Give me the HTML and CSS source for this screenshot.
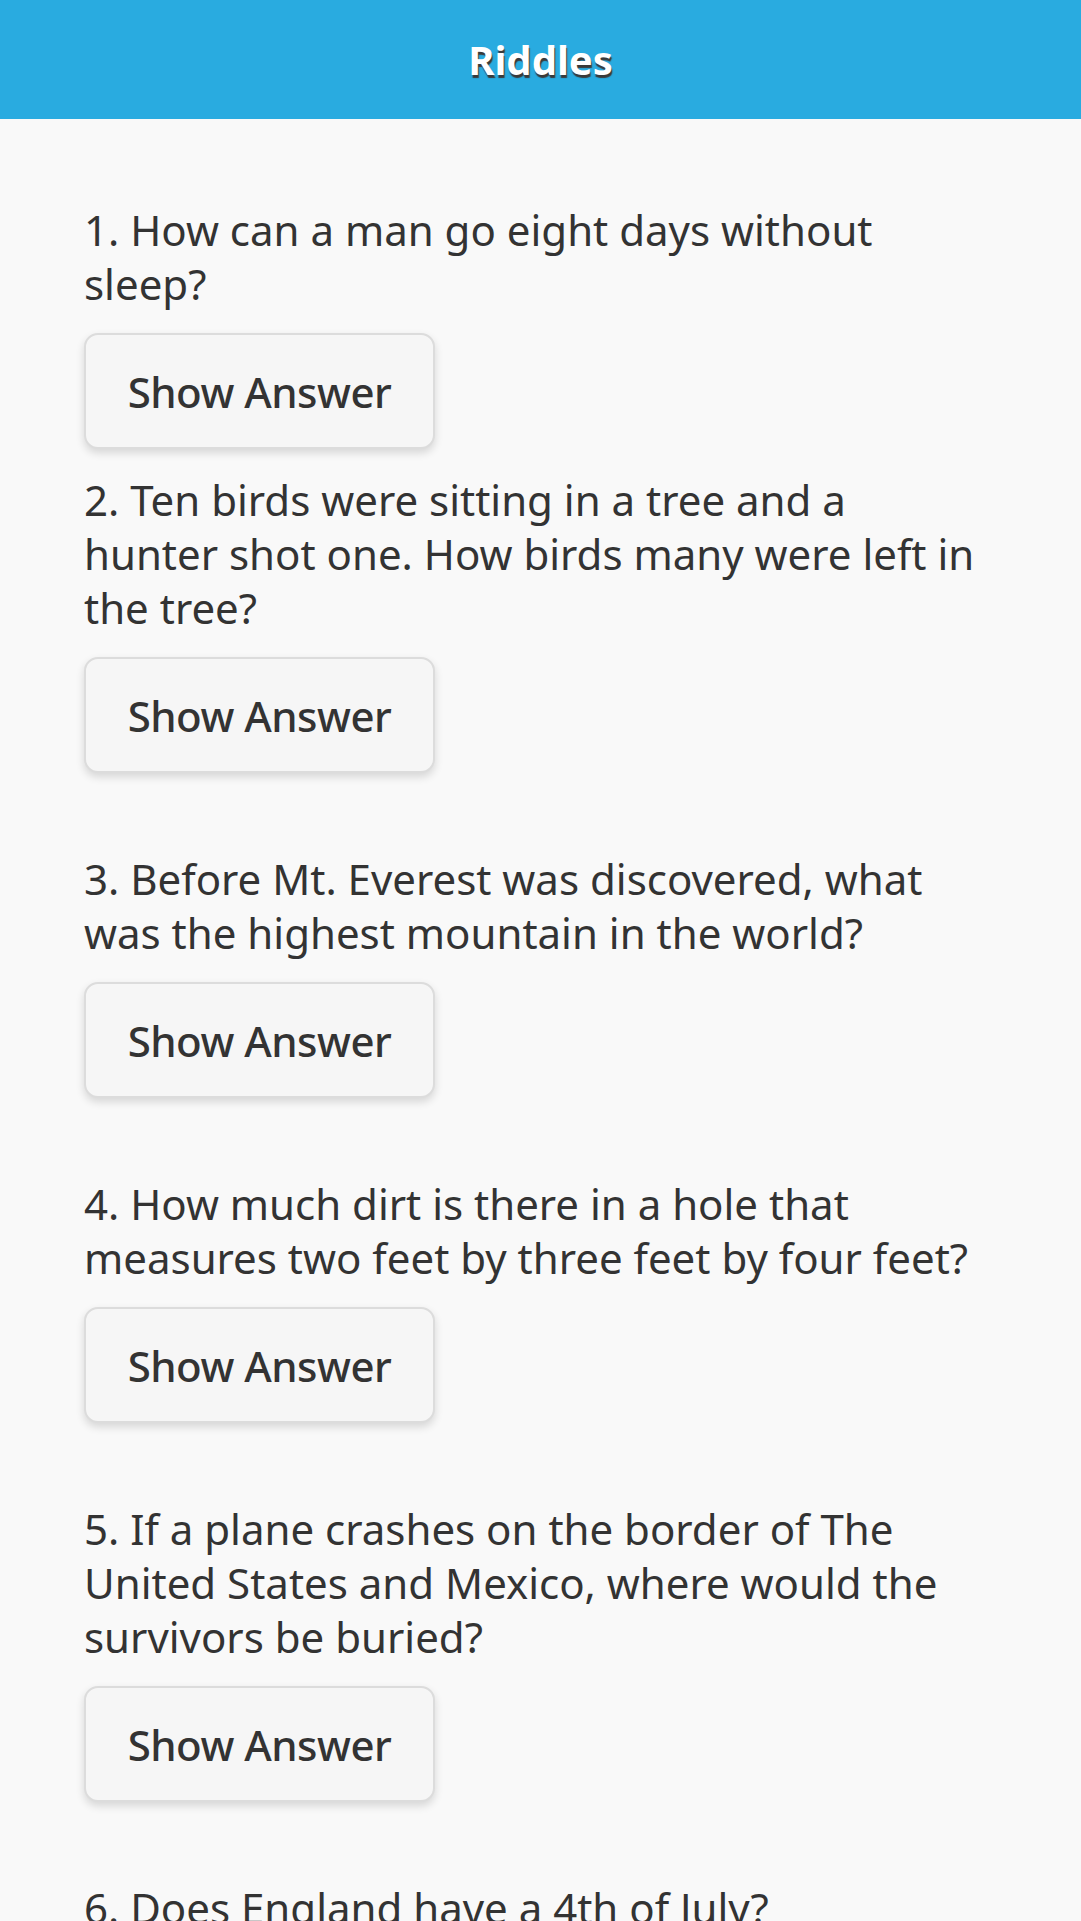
FILE: index.html
```html
<!DOCTYPE html>
<html lang="en">
<head>
<meta charset="utf-8">
<title>Riddles</title>
<link rel="stylesheet" href="styles.css">
</head>
<body>
<header class="bar">
  <h1 class="bar-title">Riddles</h1>
</header>
<main class="content">
  <section class="riddle riddle-tight">
    <p class="question">1. How can a man go eight days without sleep?</p>
    <button class="answer-btn" type="button">Show Answer</button>
  </section>
  <section class="riddle">
    <p class="question">2. Ten birds were sitting in a tree and a hunter shot one. How birds many were left in the tree?</p>
    <button class="answer-btn" type="button">Show Answer</button>
  </section>
  <section class="riddle">
    <p class="question">3. Before Mt. Everest was discovered, what was the highest mountain in the world?</p>
    <button class="answer-btn" type="button">Show Answer</button>
  </section>
  <section class="riddle">
    <p class="question">4. How much dirt is there in a hole that measures two feet by three feet by four feet?</p>
    <button class="answer-btn" type="button">Show Answer</button>
  </section>
  <section class="riddle">
    <p class="question">5. If a plane crashes on the border of The United States and Mexico, where would the survivors be buried?</p>
    <button class="answer-btn" type="button">Show Answer</button>
  </section>
  <section class="riddle">
    <p class="question">6. Does England have a 4th of July?</p>
    <button class="answer-btn" type="button">Show Answer</button>
  </section>
</main>
</body>
</html>
```
FILE: styles.css
```css
html, body {
  margin: 0;
  padding: 0;
}
body {
  background: #f9f9f9;
  color: #333;
  font-family: "Noto Sans", "Open Sans", sans-serif;
}
.bar {
  height: 119px;
  background: #29abe0;
  display: flex;
  align-items: center;
  justify-content: center;
}
.bar-title {
  margin: 0;
  font-size: 40px;
  font-weight: 700;
  color: #fff;
  text-shadow: 1px 3px 1px #3a3a3a;
  line-height: 1;
}
.content {
  padding: 84px 95px 0 84px;
}
.riddle {
  margin-bottom: 79px;
}
.riddle-tight {
  margin-bottom: 24px;
}
.question {
  margin: 0 0 22px 0;
  font-size: 42px;
  line-height: 54px;
}
.answer-btn {
  display: block;
  box-sizing: border-box;
  width: 351px;
  height: 116px;
  padding: 0;
  background: #f6f6f6;
  border: 2px solid #dcdcdc;
  border-radius: 14px;
  box-shadow: 0 4px 8px rgba(0, 0, 0, 0.14);
  color: #333;
  font-family: "Noto Sans", "Open Sans", sans-serif;
  font-size: 42px;
  font-weight: 500;
  letter-spacing: -0.5px;
  text-align: center;
  white-space: nowrap;
}
```
